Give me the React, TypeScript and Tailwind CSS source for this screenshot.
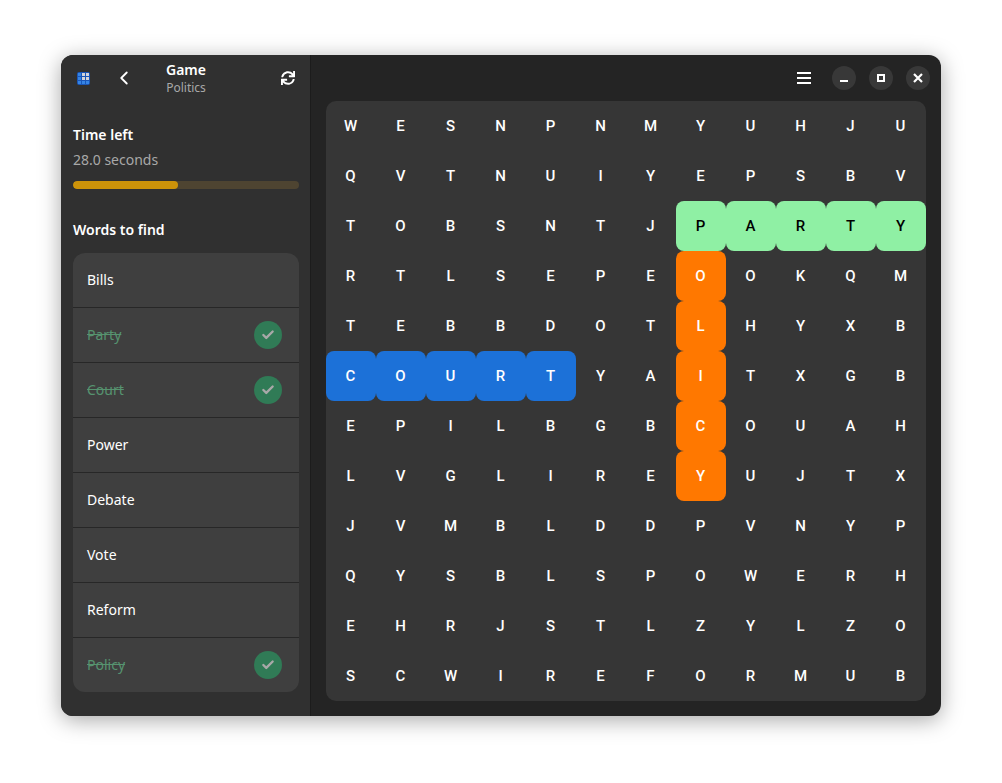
import { Check, ChevronLeft } from 'lucide-react';
import { FaSync } from 'react-icons/fa';

const rows = [
  'WESNPNMYUHJU',
  'QVTNUIYEPSBV',
  'TOBSNTJPARTY',
  'RTLSEPEOOKQM',
  'TEBBDOTLHYXB',
  'COURTYAITXGB',
  'EPILBGBCOUAH',
  'LVGLIREYUJTX',
  'JVMBLDDPVNYP',
  'QYSBLSPOWERH',
  'EHRJSTLZYLZO',
  'SCWIREFORMUB',
];

const words = [
  { name: 'Bills', found: false },
  { name: 'Party', found: true },
  { name: 'Court', found: true },
  { name: 'Power', found: false },
  { name: 'Debate', found: false },
  { name: 'Vote', found: false },
  { name: 'Reform', found: false },
  { name: 'Policy', found: true },
];

// found words on the board
function cellClass(r: number, c: number) {
  if (r === 2 && c >= 7) return 'bg-[#8ff0a4] text-black rounded-[8px]';
  if (c === 7 && r >= 3 && r <= 7) return 'bg-[#ff7800] text-white rounded-[8px]';
  if (r === 5 && c <= 4) return 'bg-[#1c71d8] text-white rounded-[8px]';
  return 'text-white';
}

function AppIcon() {
  return (
    <svg width="13" height="13" viewBox="0 0 13 13">
      <rect width="13" height="13" rx="2" fill="#1a56b8" />
      {[1, 5, 9].map((y) =>
        [1, 5, 9].map((x) => (
          <rect key={`${x}-${y}`} x={x} y={y} width="3" height="3" fill={y < 8 && x > 4 ? '#d4d4d8' : '#3584e4'} />
        )),
      )}
    </svg>
  );
}

function WindowButton({ children }: { children: React.ReactNode }) {
  return <div className="flex h-6 w-6 items-center justify-center rounded-full bg-[#383838]">{children}</div>;
}

export default function App() {
  return (
    <div className="h-[783px] w-[1002px] overflow-hidden bg-white pl-[61px] pt-[55px] font-['Noto_Sans',sans-serif]">
      <div className="flex h-[661px] w-[880px] overflow-hidden rounded-[12px] bg-[#242424] shadow-[0_4px_22px_rgba(0,0,0,0.35)]">
        <aside className="flex w-[250px] shrink-0 flex-col border-r border-[#1c1c1c] bg-[#303030] pl-3 pr-[11px]">
          <header className="flex h-[46px] items-center">
            <div className="ml-[4px] w-[13px]">
              <AppIcon />
            </div>
            <ChevronLeft className="ml-[23px] text-white" size={22} strokeWidth={2} />
            <div className="ml-[9px] flex w-[84px] flex-col items-center">
              <span className="text-[14px] font-semibold leading-[20px] text-white">Game</span>
              <span className="text-[12px] leading-[16px] text-[#a8a8a8]">Politics</span>
            </div>
            <FaSync className="ml-[53px] text-white" size={14} />
          </header>

          <p className="mt-[24px] text-[14px] font-semibold leading-[20px] text-white">Time left</p>
          <p className="mt-[5px] text-[14px] leading-[20px] text-[#a8a8a8]">28.0 seconds</p>
          <div className="mt-[11px] h-2 w-[226px] overflow-hidden rounded-full bg-[#4e4431]">
            <div className="h-full w-[105px] rounded-full bg-[#cd9309]" />
          </div>

          <p className="mt-[31px] text-[14px] font-semibold leading-[20px] text-white">Words to find</p>
          <ul className="mt-[13px] w-[226px] overflow-hidden rounded-[12px] bg-[#3f3f3f]">
            {words.map((w) => (
              <li
                key={w.name}
                className="flex h-[55px] items-center justify-between border-b border-[#272727] pl-[14px] pr-[17px] last:h-[54px] last:border-b-0"
              >
                <span className={w.found ? 'pb-[2px] text-[14px] text-[#56936f] line-through' : 'pb-[2px] text-[14px] text-white'}>
                  {w.name}
                </span>
                {w.found && (
                  <span className="flex h-7 w-7 items-center justify-center rounded-full bg-[#307b56]">
                    <Check className="text-[#a8a8a8]" size={14} strokeWidth={4} />
                  </span>
                )}
              </li>
            ))}
          </ul>
        </aside>

        <main className="flex flex-1 flex-col pl-[15px] pr-[15px]">
          <header className="flex h-[46px] items-center justify-end">
            <svg width="14" height="12" viewBox="0 0 14 12" className="mr-[21px]">
              <path d="M0 1h14M0 6h14M0 11h14" stroke="#fff" strokeWidth="2" />
            </svg>
            <div className="-mr-[4px] flex gap-[13px]">
              <WindowButton>
                <svg width="8" height="8" viewBox="0 0 8 8">
                  <path d="M0 7h8" stroke="#fff" strokeWidth="2" />
                </svg>
              </WindowButton>
              <WindowButton>
                <svg width="8" height="8" viewBox="0 0 8 8">
                  <rect x="1" y="1" width="6" height="6" fill="none" stroke="#fff" strokeWidth="2" />
                </svg>
              </WindowButton>
              <WindowButton>
                <svg width="10" height="10" viewBox="0 0 10 10">
                  <path d="M1 1l8 8M9 1l-8 8" stroke="#fff" strokeWidth="2.2" />
                </svg>
              </WindowButton>
            </div>
          </header>
          <div className="grid h-[600px] w-[600px] grid-cols-12 grid-rows-12 rounded-[10px] bg-[#363636] font-['Roboto',sans-serif]">
            {rows.map((row, r) =>
              row.split('').map((ch, c) => (
                <div key={`${r}-${c}`} className={`flex items-center justify-center pr-[1px] text-[15px] font-medium ${cellClass(r, c)}`}>
                  {ch}
                </div>
              )),
            )}
          </div>
        </main>
      </div>
    </div>
  );
}
